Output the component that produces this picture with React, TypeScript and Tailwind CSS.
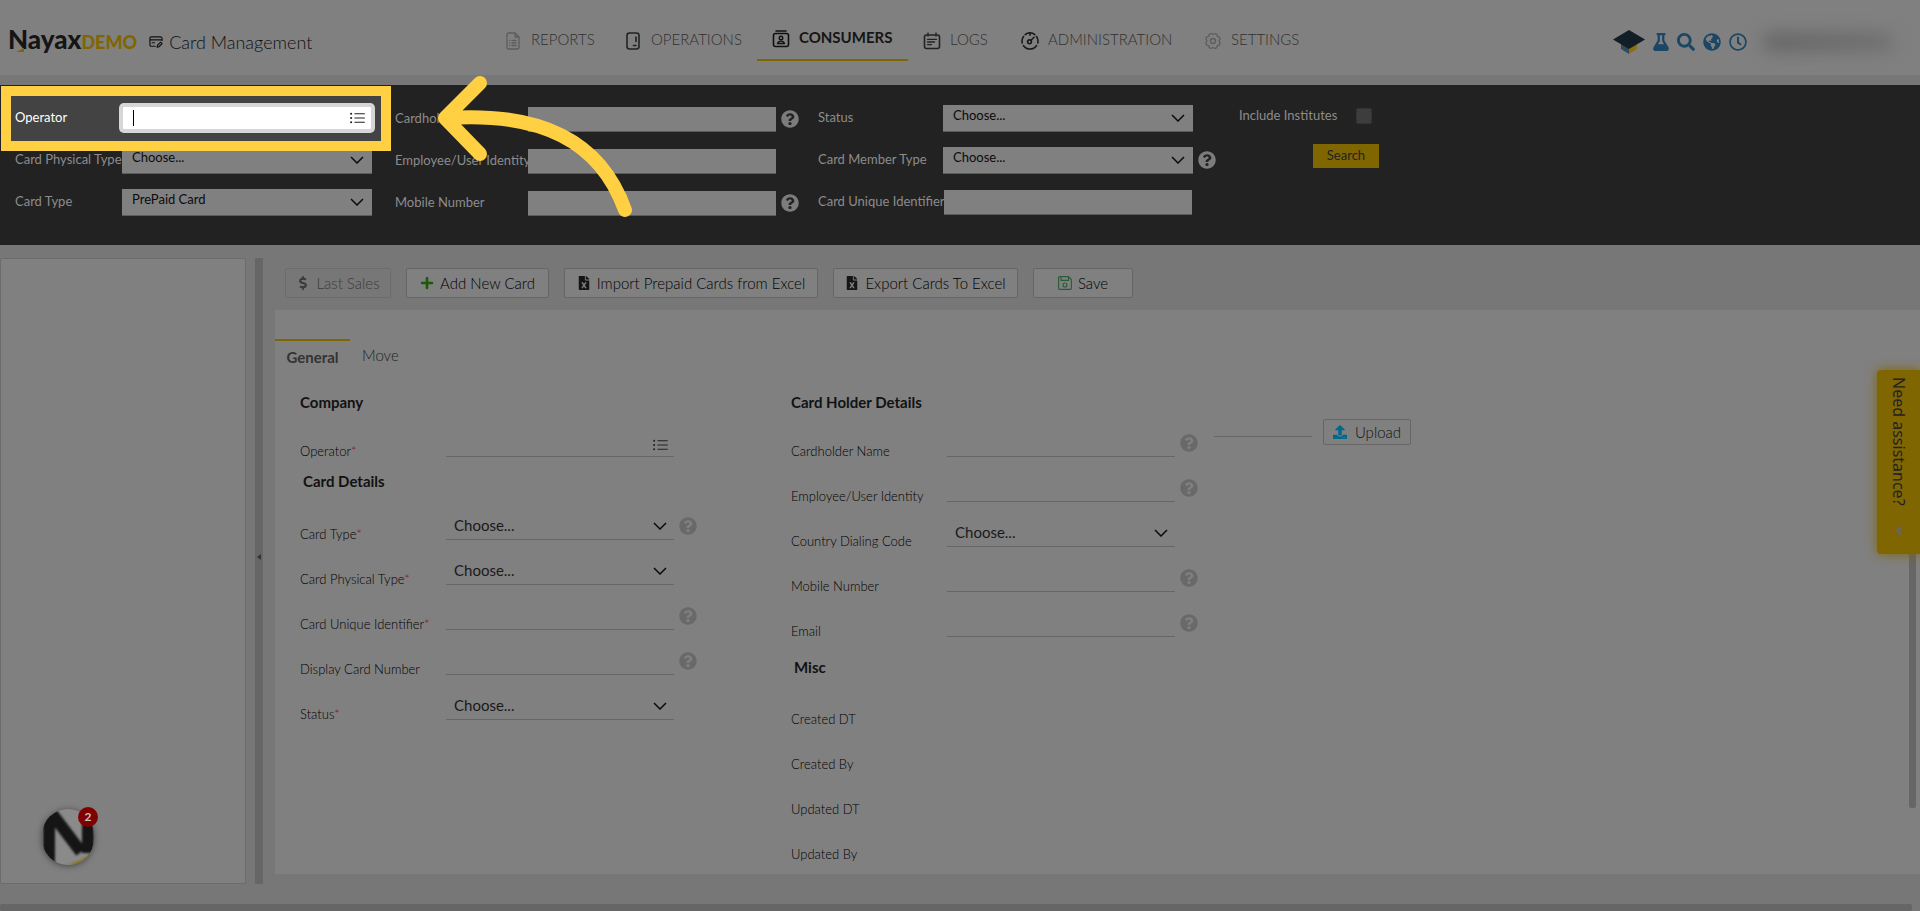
import { FaDollarSign, FaFileExcel, FaFlask, FaGlobeAmericas, FaPlus, FaQuestionCircle, FaRegClock, FaSearch, FaUpload } from "react-icons/fa";
import { BsListUl } from "react-icons/bs";

const icon = {
  width: 18,
  height: 18,
  viewBox: "0 0 18 18",
  fill: "none",
  stroke: "currentColor",
  strokeWidth: 1.6,
  strokeLinecap: "round",
  strokeLinejoin: "round",
} as const;

const ReportsIcon = () => (
  <svg {...icon} strokeWidth={1.3}>
    <path d="M4.5 1H11l4 4v10.5a1.500 1.500 0 0 1-1.500 1.500h-9A1.500 1.500 0 0 1 3 15.500v-13A1.500 1.500 0 0 1 4.500 1zM11 1v4h4M8 8.500h4M8 11h4M8 13.500h4M5.700 8.500h.1M5.700 11h.1M5.700 13.500h.1" />
  </svg>
);

const OperationsIcon = () => (
  <svg {...icon}>
    <rect x="3" y="1" width="12" height="16" rx="2.5" />
    <path d="M12 5v4.500M9.500 13.500H12" />
  </svg>
);

const ConsumersIcon = () => (
  <svg {...icon}>
    <rect x="1.5" y="3.5" width="15" height="13" rx="2" />
    <path d="M4 1h10" />
    <circle cx="9" cy="8" r="1.8" strokeWidth="1.4" />
    <path d="M5.500 13.500c.6-2 2-2.400 3.500-2.400s2.900.4 3.500 2.400z" strokeWidth="1.4" />
  </svg>
);

const LogsIcon = () => (
  <svg {...icon}>
    <rect x="1.5" y="3" width="15" height="13.5" rx="2" />
    <path d="M5 1v3M13 1v3M4.500 7.300h9M4.500 10h7M4.500 12.600h4" strokeWidth="1.3" />
  </svg>
);

const AdminIcon = () => (
  <svg {...icon}>
    <path d="M1.200 11a8 8 0 0 1 1.300-6.500M4.200 2.600a8 8 0 0 1 9.600 0M15.500 4.500a8 8 0 0 1 1.300 6.500M2.500 13.700a8 8 0 0 0 13 0M9 1.200v2" />
    <circle cx="8.500" cy="9.800" r="1.9" />
    <path d="M10 8.300l3-3" />
  </svg>
);

const SettingsIcon = () => (
  <svg {...icon} strokeWidth={1.3}>
    <path d="M7 1.500l2 1 2-1 1.800.8.500 2 2 .7.900 1.700-1 1.800v1l1 1.800-.9 1.800-2 .6-.5 2-1.800.8-2-1-2 1-1.800-.8-.5-2-2-.6-.9-1.800 1-1.800v-1l-1-1.800.9-1.700 2-.7.500-2z" />
    <circle cx="9" cy="9" r="2.5" />
  </svg>
);

const CardIcon = () => (
  <svg {...icon} width={14} height={14} strokeWidth={1.5}>
    <path d="M8 14.500H3A1.800 1.800 0 0 1 1.200 12.700V4.300A1.800 1.800 0 0 1 3 2.500h12a1.800 1.800 0 0 1 1.800 1.800V7M1.200 6.300h15.600M4 10h3" />
    <path d="M10.500 15.800l.5-2.600 4-4 1.900 1.900-4 4z" />
  </svg>
);

const SaveIcon = () => (
  <svg width="14" height="14" viewBox="0 0 14 14" fill="none" stroke="currentColor" strokeWidth="1.1">
    <path d="M1.500.600h9l2.900 2.900v9a.9.900 0 0 1-.9.900h-11a.9.900 0 0 1-.9-.9v-11a.9.900 0 0 1 .9-.9zM3 .600v3.800h7.500V.600" />
    <circle cx="7" cy="9" r="2" />
  </svg>
);

const GradCap = () => (
  <svg width="32" height="24" viewBox="0 0 32 24">
    <path d="M8 11v8l8 5v-9z" fill="#34495c" />
    <path d="M24 11v8l-8 5v-9z" fill="#8a7013" />
    <path d="M16 0l16 9.500L16 19 0 9.500z" fill="#121e26" />
  </svg>
);

const Chevron = ({ className }: { className: string }) => (
  <svg width="14" height="8" viewBox="0 0 14 8" fill="none" stroke="#0b0b0b" strokeWidth="1.5" className={`pointer-events-none absolute ${className}`}>
    <path d="M1 1l6 6 6-6" />
  </svg>
);

const Help = ({ className }: { className: string }) => (
  <button type="button" aria-label="Help" className={`shrink-0 ${className}`}>
    <FaQuestionCircle size={18} />
  </button>
);

const navItems = [
  { label: "REPORTS", icon: ReportsIcon, width: "w-[120px]", color: "text-[#5c5c5c]" },
  { label: "OPERATIONS", icon: OperationsIcon, width: "w-[148px]", color: "text-[#222222]" },
  { label: "CONSUMERS", icon: ConsumersIcon, width: "w-[151px]", color: "text-[#111111]", active: true },
  { label: "LOGS", icon: LogsIcon, width: "w-[98px]", color: "text-[#222222]" },
  { label: "ADMINISTRATION", icon: AdminIcon, width: "w-[183px]", color: "text-[#1a1a1a]" },
  { label: "SETTINGS", icon: SettingsIcon, width: "w-[127px]", color: "text-[#5c5c5c]" },
];

const tools = [
  { label: "Add New Card", icon: <FaPlus size={14} className="text-[#1c5a08]" />, width: "w-[143px]" },
  { label: "Import Prepaid Cards from Excel", icon: <FaFileExcel size={14} className="text-[#151515]" />, width: "w-[254px]" },
  { label: "Export Cards To Excel", icon: <FaFileExcel size={14} className="text-[#151515]" />, width: "w-[185px]" },
  { label: "Save", icon: <SaveIcon />, width: "w-[100px] text-[#2a5a38]" },
];

function Header() {
  return (
    <header className="flex h-[75px] items-center bg-[#808080]">
      <div className="flex w-[489px] shrink-0 items-center pl-2 pt-2">
        <a href="#home" className="relative flex items-baseline leading-6">
          <span className="text-[26px] font-black text-[#151515]">Nayax</span>
          <span className="text-lg font-black text-[#806600]">DEMO</span>
          <svg width="8" height="4" viewBox="0 0 8 4" className="absolute bottom-1 left-2">
            <path d="M0 4l8-4v4z" fill="#806600" />
          </svg>
        </a>
        <h1 className="ml-3 flex items-center gap-1.5 text-lg font-light text-[#111111]">
          <CardIcon />
          Card Management
        </h1>
      </div>
      <nav className="flex">
        {navItems.map(({ label, icon: Icon, width, color, active }) => (
          <a
            key={label}
            href={`#${label.toLowerCase()}`}
            className={`flex h-[46px] items-center gap-[9px] border-b-2 pl-[15px] ${width} ${active ? "border-[#806600] pt-0.5" : "border-transparent pt-1.5"}`}
          >
            <span className={`mt-0.5 shrink-0 ${color}`}>
              <Icon />
            </span>
            <span className={active ? "text-[15px] font-bold text-[#151515]" : "text-[15px] font-light text-[#303030]"}>{label}</span>
          </a>
        ))}
      </nav>
      <div className="ml-auto flex items-center gap-2 pr-3 pt-2 text-[#1b4666]">
        <GradCap />
        <button type="button" aria-label="Lab" className="w-4"><FaFlask size={18} className="-ml-px" /></button>
        <button type="button" aria-label="Find"><FaSearch size={18} /></button>
        <button type="button" aria-label="Language"><FaGlobeAmericas size={18} /></button>
        <button type="button" aria-label="History"><FaRegClock size={18} /></button>
        {/* Account name is obscured */}
        <div className="w-[153px] pl-2">
          <div className="h-4 w-[130px] rounded-full bg-linear-to-r from-[#606060] to-[#6c6c6c] blur-[9px]" />
        </div>
      </div>
    </header>
  );
}

type FilterProps = { id: string; label: string; labelWidth: string; options?: string[]; help?: boolean };

function FilterField({ id, label, labelWidth, options, help }: FilterProps) {
  return (
    <div className="flex h-[42px] items-center">
      <label htmlFor={id} className={`shrink-0 whitespace-nowrap text-[13px] text-[#8c8c8c] ${labelWidth}`}>{label}</label>
      {options ? (
        <div className="relative">
          <select id={id} className="block h-[27px] w-[250px] appearance-none border-b border-[#5c5c5c] bg-[#808080] pb-1 pl-2.5 text-[13px] text-[#0b0b0b]">
            {options.map((o) => <option key={o}>{o}</option>)}
          </select>
          <Chevron className="right-2 top-[9px]" />
        </div>
      ) : (
        <input id={id} type="text" className="h-[25px] w-[248px] border-b border-[#5c5c5c] bg-[#808080] px-2 text-[13px]" />
      )}
      {help && <Help className="ml-[5px] text-[#7c7c7c]" />}
    </div>
  );
}

function Filters() {
  return (
    <section className="relative mt-2.5 flex h-[160px] bg-[#222222] pt-[13px]">
      <div className="absolute left-px top-px z-10 h-[65px] w-[390px] border-[10px] border-[#ffd042] bg-[#434343]" />
      <div className="-mt-px w-[380px] shrink-0 pl-[15px]">
        <div className="relative z-20 flex h-[42px] items-center">
          <label htmlFor="f-operator" className="w-[107px] text-[13px] text-white">Operator</label>
          <input id="f-operator" type="text" className="h-6 w-[250px] rounded-xs border border-[#d6d6d6] bg-white pl-2.5 text-[13px] ring-3 ring-[#d6d6d6]" />
          <span className="absolute left-[118px] h-4 w-px bg-black" />
          <BsListUl size={17} className="absolute left-[334px] text-[#222222]" />
        </div>
        <FilterField id="f-physical" label="Card Physical Type" labelWidth="w-[107px]" options={["Choose..."]} />
        <FilterField id="f-type" label="Card Type" labelWidth="w-[107px]" options={["PrePaid Card"]} />
      </div>
      <div className="w-[423px] shrink-0 pl-[15px]">
        <FilterField id="f-holder" label="Cardholder Name" labelWidth="w-[133px]" help />
        <FilterField id="f-identity" label="Employee/User Identity" labelWidth="w-[133px]" />
        <FilterField id="f-mobile" label="Mobile Number" labelWidth="w-[133px]" help />
      </div>
      <div className="-mt-px w-[421px] shrink-0 pl-[15px]">
        <FilterField id="f-status" label="Status" labelWidth="w-[125px]" options={["Choose..."]} />
        <FilterField id="f-member" label="Card Member Type" labelWidth="w-[125px]" options={["Choose..."]} help />
        <FilterField id="f-unique" label="Card Unique Identifier" labelWidth="w-[126px]" />
      </div>
      <div className="w-[155px] shrink-0 pl-[15px]">
        <div className="flex h-9 items-center justify-between pr-[7px]">
          <label htmlFor="f-institutes" className="text-[13px] text-[#8c8c8c]">Include Institutes</label>
          <input id="f-institutes" type="checkbox" className="size-4 appearance-none rounded-xs border border-[#333333] bg-[#3d3d3d]" />
        </div>
        <button type="button" className="ml-auto mt-2.5 block h-6 w-[66px] bg-[#806600] text-[13px] text-[#222222]">Search</button>
      </div>
      {/* Callout arrow pointing at the operator field */}
      <svg width="210" height="150" viewBox="430 72 210 150" fill="none" stroke="#ffd042" strokeWidth="14" strokeLinecap="round" strokeLinejoin="round" className="absolute -top-[13px] left-[430px] z-20">
        <path d="M480 83l-35 35 35 36M447 118C540 112 600 140 625 210" />
      </svg>
    </section>
  );
}

type FieldProps = { id: string; label: string; labelWidth: string; required?: boolean; kind?: "select" | "picker" | "text"; help?: boolean };

function Field({ id, label, labelWidth, required, kind = "text", help }: FieldProps) {
  return (
    <div className="flex h-[45px] items-end">
      <label htmlFor={id} className={`shrink-0 whitespace-nowrap text-[13px] leading-3 font-light text-black ${labelWidth}`}>
        {label}
        {required && <span className="text-[#8a1020]">*</span>}
      </label>
      <div className="relative">
        {kind === "select" ? (
          <select id={id} className="block h-7 w-[228px] appearance-none border-b border-[#666666] pl-2 text-[15px] text-[#1a1a1a]">
            <option>Choose...</option>
          </select>
        ) : (
          <input id={id} type="text" className="block h-7 w-[228px] border-b border-[#666666] px-2 text-[15px]" />
        )}
        {kind === "select" && <Chevron className="right-[7px] top-2.5" />}
        {kind === "picker" && <BsListUl size={17} className="absolute right-[5px] top-2 text-[#222222]" />}
      </div>
      {help && <Help className="mb-[5px] ml-[5px] text-[#696969]" />}
    </div>
  );
}

const SectionTitle = ({ children }: { children: string }) => <h2 className="text-[15px] leading-5 font-bold text-[#121212]">{children}</h2>;

function CardForm() {
  return (
    <div className="flex pl-[25px]">
      <div className="w-[491px] shrink-0">
        <SectionTitle>Company</SectionTitle>
        <Field id="operator" label="Operator" labelWidth="w-[146px]" required kind="picker" />
        <div className="flex h-[38px] items-center pl-[3px] pt-2.5">
          <SectionTitle>Card Details</SectionTitle>
        </div>
        <Field id="card-type" label="Card Type" labelWidth="w-[146px]" required kind="select" help />
        <Field id="physical-type" label="Card Physical Type" labelWidth="w-[146px]" required kind="select" />
        <Field id="unique-id" label="Card Unique Identifier" labelWidth="w-[146px]" required help />
        <Field id="display-number" label="Display Card Number" labelWidth="w-[146px]" help />
        <Field id="status" label="Status" labelWidth="w-[146px]" required kind="select" />
      </div>
      <div className="w-[423px] shrink-0">
        <SectionTitle>Card Holder Details</SectionTitle>
        <Field id="holder-name" label="Cardholder Name" labelWidth="w-[156px]" help />
        <Field id="identity" label="Employee/User Identity" labelWidth="w-[156px]" help />
        <Field id="dialing-code" label="Country Dialing Code" labelWidth="w-[156px]" kind="select" />
        <Field id="mobile" label="Mobile Number" labelWidth="w-[156px]" help />
        <Field id="email" label="Email" labelWidth="w-[156px]" help />
        <div className="flex h-[43px] items-center pl-[3px] pt-4">
          <SectionTitle>Misc</SectionTitle>
        </div>
        {["Created DT", "Created By", "Updated DT", "Updated By"].map((label) => (
          <div key={label} className="flex h-[45px] items-end text-[13px] leading-3 font-light text-black">{label}</div>
        ))}
      </div>
      <div className="flex items-start pt-[27px]">
        <input type="text" aria-label="File name" className="h-[18px] w-[98px] border-b border-[#666666]" />
        <button type="button" className="ml-[11px] flex h-[26px] w-[88px] items-center justify-center gap-2 rounded-xs border border-[#666666] text-[15px] font-light text-[#111111]">
          <FaUpload size={14} className="text-[#00688c]" />
          Upload
        </button>
      </div>
    </div>
  );
}

function ChatBubble() {
  return (
    <button type="button" aria-label="Open chat" className="absolute bottom-[18px] left-[41px]">
      <svg width="52" height="56" viewBox="0 0 52 56" className="rounded-full bg-[#8a8a8a] shadow-[0_1px_6px_#444]">
        <g className="blur-[1px]" fill="none" stroke="#151515" strokeWidth="12">
          <path d="M7 0v56M46 0v44M8 2l31 41" />
          <path d="M24 56c10-2 18-6 28-14v14z" fill="#8a7013" stroke="none" />
        </g>
      </svg>
      <span className="absolute -right-1 -top-0.5 size-5 rounded-full bg-[#800000] text-center text-xs leading-5 font-bold text-[#c0c0c0]">2</span>
    </button>
  );
}

export default function App() {
  return (
    <div className="relative flex min-h-screen flex-col overflow-hidden bg-[#777777] font-['Lato','Open_Sans',sans-serif]">
      <Header />
      <Filters />
      <main className="flex grow pt-[13px] pb-5">
        <aside className="relative w-[246px] shrink-0 rounded-xs border border-[#6c6c6c] bg-[#808080]">
          <ChatBubble />
        </aside>
        <div className="ml-[9px] flex w-2 shrink-0 items-center justify-center bg-[#666666] pb-7">
          <span className="border-y-[3px] border-r-4 border-y-transparent border-r-[#333333]" />
        </div>
        <div className="ml-3 flex grow flex-col pb-2.5">
          <div className="flex gap-[15px] pt-2.5 pb-3 pl-2.5">
            <button type="button" disabled className="flex h-[30px] w-[106px] items-center justify-center gap-1.5 rounded-xs border border-[#6c6c6c] text-[15px] font-light text-[#3c3c3c]">
              <FaDollarSign size={14} />
              Last Sales
            </button>
            {tools.map((tool) => (
              <button key={tool.label} type="button" className={`flex h-[30px] items-center justify-center gap-1.5 rounded-xs border border-[#666666] bg-[#808080] ${tool.width}`}>
                {tool.icon}
                <span className="text-[15px] font-light text-black">{tool.label}</span>
              </button>
            ))}
          </div>
          <div className="grow bg-[#808080] pt-[29px]">
            <div role="tablist" className="flex h-[53px] items-start text-[15px]">
              <button type="button" role="tab" aria-selected="true" className="h-8 w-[75px] border-t-2 border-[#806600] pt-0.5 font-bold text-[#333333]">General</button>
              <button type="button" role="tab" aria-selected="false" className="ml-3 h-8 font-light text-[#222222]">Move</button>
            </div>
            <CardForm />
          </div>
        </div>
      </main>
      <footer className="mr-2 h-[7px] rounded-xs bg-[#666666]" />
      <div className="absolute right-1 top-[400px] h-[408px] w-[7px] rounded-xs bg-[#666666]" />
      <button type="button" className="absolute right-0 top-[370px] flex h-[184px] w-[43px] items-center gap-5 rounded-l-sm bg-[#806600] pt-[7px] font-['Noto_Sans'] text-base text-[#222222] shadow-[0_0_12px_#806600] [writing-mode:vertical-rl]">
        Need assistance?
        <svg width="8" height="10" viewBox="0 0 8 10" fill="none" stroke="#666666" strokeWidth="2.5">
          <path d="M6.500 1l-4 4 4 4" />
        </svg>
      </button>
    </div>
  );
}
